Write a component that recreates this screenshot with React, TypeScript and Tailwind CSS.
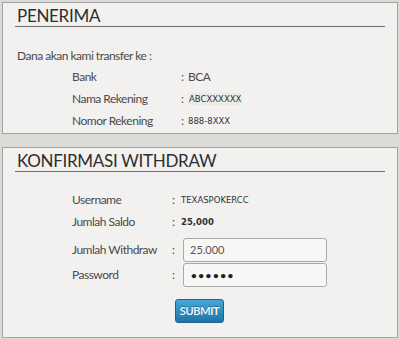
import React from 'react';

const lato = "font-['Lato','Liberation_Sans',sans-serif]";
const small = "font-['DejaVu_Sans','Liberation_Sans',sans-serif] text-[8.5px] text-[#333] tracking-normal";

function Heading({ children }: { children: React.ReactNode }) {
  return (
    <div className="mx-[12px] mt-[4px] border-b border-[#6e6e6e] pb-[1px] pl-[2px]">
      <h2 className={`${lato} text-[17px] leading-[18px] tracking-[-0.3px] text-[#2e2e2e]`}>{children}</h2>
    </div>
  );
}

function Row({ label, colonX, children }: { label: string; colonX: string; children: React.ReactNode }) {
  return (
    <div className={`flex h-[22px] items-center pl-[69px] ${lato} text-[12px] tracking-[-0.5px] text-[#4a4a4a]`}>
      <span className={colonX}>{label}</span>
      <span className="w-[7px]">:</span>
      {children}
    </div>
  );
}

export default function App() {
  return (
    <div className="flex h-[339px] w-[400px] flex-col gap-[13px] bg-[#dddbd7] px-[2px] pt-[2px]">
      {/* Penerima */}
      <section className="h-[132px] border border-[#a2a2a2] bg-[#f2f1ef]">
        <Heading>PENERIMA</Heading>
        <p className={`${lato} mt-[21px] pl-[14px] text-[12px] leading-[16px] tracking-[-0.5px] text-[#4a4a4a]`}>
          Dana akan kami transfer ke :
        </p>
        <div className="mt-[2px]">
          <Row label="Bank" colonX="w-[109px]">
            <span>BCA</span>
          </Row>
          <Row label="Nama Rekening" colonX="w-[109px]">
            <span className={`${small} bg-[#ebebe6] px-[1px]`}>ABCXXXXXX</span>
          </Row>
          <Row label="Nomor Rekening" colonX="w-[109px]">
            <span className={`${small} text-[7.5px] tracking-[-0.4px]`}>888-8XXX</span>
          </Row>
        </div>
      </section>

      {/* Konfirmasi withdraw */}
      <section className="h-[191px] border border-[#a2a2a2] bg-[#f2f1ef]">
        <Heading>KONFIRMASI WITHDRAW</Heading>
        <div className="mt-[17px]">
          <Row label="Username" colonX="w-[100px]">
            <span className={`${small} ml-[2px]`}>TEXASPOKERCC</span>
          </Row>
          <Row label="Jumlah Saldo" colonX="w-[100px]">
            <span className={`${small} ml-[2px] font-bold`}>25,000</span>
          </Row>
        </div>
        <div className="mt-[5px] flex flex-col gap-[1px]">
          <div className={`flex h-[24px] items-center pl-[69px] ${lato} text-[12px] tracking-[-0.5px] text-[#4a4a4a]`}>
            <span className="w-[100px]">Jumlah Withdraw</span>
            <span className="w-[11px]">:</span>
            <div className="flex h-[24px] w-[144px] items-center rounded-[3px] border border-[#a9a9a9] bg-[#f7f7f6] pl-[6px] text-[11px] tracking-normal text-[#555]">
              25.000
            </div>
          </div>
          <div className={`flex h-[24px] items-center pl-[69px] ${lato} text-[12px] tracking-[-0.5px] text-[#4a4a4a]`}>
            <span className="w-[100px]">Password</span>
            <span className="w-[11px]">:</span>
            <div className="flex h-[24px] w-[144px] items-center rounded-[3px] border border-[#a9a9a9] bg-[#f7f7f6] pl-[7px] text-[10px] font-bold tracking-[1.5px] text-[#222]">
              ••••••
            </div>
          </div>
        </div>
        <div className="mt-[10px] pl-[172px]">
          <button
            className={`${lato} h-[24px] w-[49px] rounded-[3px] border border-[#1c6591] bg-[linear-gradient(#46a8da,#1d75a6)] text-[11px] font-semibold tracking-[-0.3px] text-white [text-shadow:0_-1px_0_rgba(0,0,0,0.3)]`}
          >
            SUBMIT
          </button>
        </div>
      </section>
    </div>
  );
}
